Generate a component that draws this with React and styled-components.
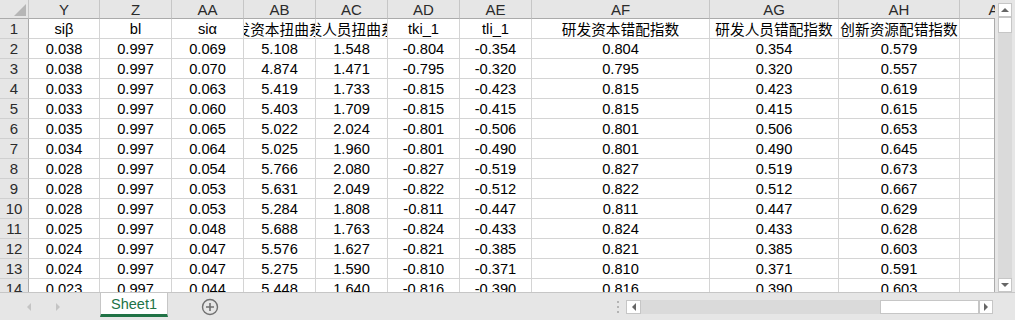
import React from 'react';
import styled, { createGlobalStyle } from 'styled-components';

const GlobalStyle = createGlobalStyle`
  html, body {
    margin: 0;
    padding: 0;
    background: #e6e6e6;
  }
  body {
    font-family: "Liberation Sans", "Noto Sans CJK SC", sans-serif;
  }
`;

const columns = [
  { name: 'Y', width: 71 },
  { name: 'Z', width: 72 },
  { name: 'AA', width: 72 },
  { name: 'AB', width: 72 },
  { name: 'AC', width: 72 },
  { name: 'AD', width: 72 },
  { name: 'AE', width: 72 },
  { name: 'AF', width: 178 },
  { name: 'AG', width: 129 },
  { name: 'AH', width: 121 },
  { name: 'AI', width: 72 }
];

const template = `29px ${columns.map(c => c.width + 'px').join(' ')}`;

const titles = [
  'siβ', 'bl', 'siα', '研发资本扭曲系数', '研发人员扭曲系数', 'tki_1', 'tli_1',
  '研发资本错配指数', '研发人员错配指数', '创新资源配错指数', ''
];

const data = [
  ['0.038', '0.997', '0.069', '5.108', '1.548', '-0.804', '-0.354', '0.804', '0.354', '0.579'],
  ['0.038', '0.997', '0.070', '4.874', '1.471', '-0.795', '-0.320', '0.795', '0.320', '0.557'],
  ['0.033', '0.997', '0.063', '5.419', '1.733', '-0.815', '-0.423', '0.815', '0.423', '0.619'],
  ['0.033', '0.997', '0.060', '5.403', '1.709', '-0.815', '-0.415', '0.815', '0.415', '0.615'],
  ['0.035', '0.997', '0.065', '5.022', '2.024', '-0.801', '-0.506', '0.801', '0.506', '0.653'],
  ['0.034', '0.997', '0.064', '5.025', '1.960', '-0.801', '-0.490', '0.801', '0.490', '0.645'],
  ['0.028', '0.997', '0.054', '5.766', '2.080', '-0.827', '-0.519', '0.827', '0.519', '0.673'],
  ['0.028', '0.997', '0.053', '5.631', '2.049', '-0.822', '-0.512', '0.822', '0.512', '0.667'],
  ['0.028', '0.997', '0.053', '5.284', '1.808', '-0.811', '-0.447', '0.811', '0.447', '0.629'],
  ['0.025', '0.997', '0.048', '5.688', '1.763', '-0.824', '-0.433', '0.824', '0.433', '0.628'],
  ['0.024', '0.997', '0.047', '5.576', '1.627', '-0.821', '-0.385', '0.821', '0.385', '0.603'],
  ['0.024', '0.997', '0.047', '5.275', '1.590', '-0.810', '-0.371', '0.810', '0.371', '0.591'],
  ['0.023', '0.997', '0.044', '5.448', '1.640', '-0.816', '-0.390', '0.816', '0.390', '0.603']
];

const Window = styled.div`
  width: 1015px;
  height: 320px;
  overflow: hidden;
  display: flex;
  flex-direction: column;
  background: #e6e6e6;
`;

const Workspace = styled.div`
  height: 292px;
  display: flex;
`;

const Viewport = styled.div`
  width: 995px;
  height: 292px;
  overflow: hidden;
  position: relative;

  &::after {
    content: '';
    position: absolute;
    top: 18px;
    right: 0;
    bottom: 0;
    width: 1px;
    background: #ababab;
  }
`;

const Row = styled.div`
  display: grid;
  grid-template-columns: ${template};
  width: max-content;
  height: ${props => (props.header ? 19 : 20)}px;
`;

const Corner = styled.div`
  background: #e6e6e6;
  border-right: 1px solid #c6c6c6;
  border-bottom: 1px solid #ababab;
  display: flex;
  align-items: flex-end;
  justify-content: flex-end;
  padding: 0 2px 2px 0;
`;

const ColHead = styled.div`
  background: #e6e6e6;
  border-right: 1px solid #c6c6c6;
  border-bottom: 1px solid #ababab;
  color: #2b2b2b;
  font-size: 15px;
  display: flex;
  align-items: center;
  justify-content: center;
  white-space: nowrap;
`;

const RowHead = styled.div`
  background: #e6e6e6;
  border-right: 1px solid #ababab;
  border-bottom: 1px solid #d0d0d0;
  color: #2b2b2b;
  font-size: 15px;
  display: flex;
  align-items: center;
  justify-content: center;
`;

const Cell = styled.div`
  background: #fff;
  border-right: 1px solid #d4d4d4;
  border-bottom: 1px solid #d4d4d4;
  color: #000;
  font-size: 14.67px;
  display: flex;
  align-items: center;
  justify-content: center;
  white-space: nowrap;
  overflow: hidden;
`;

const VScroll = styled.div`
  width: 20px;
  display: flex;
  flex-direction: column;
  padding: 3px 3px 0;
  box-sizing: border-box;
`;

const ScrollButton = styled.div`
  width: ${props => props.w || 14}px;
  height: ${props => props.h || 14}px;
  box-sizing: border-box;
  background: #fff;
  border: 1px solid #c6c6c6;
  display: flex;
  align-items: center;
  justify-content: center;
  flex-shrink: 0;
`;

const Thumb = styled.div`
  background: #fff;
  border: 1px solid #c6c6c6;
  box-sizing: border-box;
  flex-shrink: 0;
  ${props => (props.vertical ? 'height: 16px;' : 'width: 99px; height: 14px;')}
`;

const Track = styled.div`
  flex: 1;
  background: #dadada;
`;

const Arrow = styled.span`
  width: 0;
  height: 0;
  border-style: solid;
  border-color: transparent;
  ${props => props.dir === 'up' && `border-width: 0 4px 4px; border-bottom-color: ${props.color};`}
  ${props => props.dir === 'down' && `border-width: 4px 4px 0; border-top-color: ${props.color};`}
  ${props => props.dir === 'left' && `border-width: 4px 4px 4px 0; border-right-color: ${props.color};`}
  ${props => props.dir === 'right' && `border-width: 4px 0 4px 4px; border-left-color: ${props.color};`}
`;

const BottomBar = styled.div`
  height: 28px;
  box-sizing: border-box;
  border-top: 1px solid #c6c6c6;
  display: flex;
  align-items: center;
`;

const Nav = styled.div`
  width: 88px;
  display: flex;
  align-items: center;
  gap: 25px;
  padding-left: 27px;
  box-sizing: border-box;
`;

const SheetTab = styled.div`
  align-self: flex-start;
  margin-left: 12px;
  width: 68px;
  height: 24px;
  box-sizing: border-box;
  background: #fff;
  border-left: 1px solid #c6c6c6;
  border-right: 1px solid #c6c6c6;
  border-bottom: 3px solid #217346;
  color: #217346;
  font-size: 14.5px;
  display: flex;
  align-items: center;
  justify-content: center;
  padding-top: 1px;
`;

const AddSheet = styled.div`
  margin-left: 33px;
  width: 18px;
  height: 18px;
  display: flex;
`;

const Grip = styled.div`
  margin-left: auto;
  width: 16px;
  display: flex;
  flex-direction: column;
  align-items: center;
  gap: 3px;

  span {
    width: 2px;
    height: 2px;
    background: #b4b4b4;
  }
`;

const HScroll = styled.div`
  width: 367px;
  height: 14px;
  margin-right: 22px;
  display: flex;
`;

export default function App() {
  return (
    <Window>
      <GlobalStyle />
      <Workspace>
        <Viewport>
          <Row header>
            <Corner>
              <svg width="12" height="12" viewBox="0 0 12 12">
                <polygon points="0,12 12,0 12,12" fill="#b6b6b6" />
              </svg>
            </Corner>
            {columns.map(c => (
              <ColHead key={c.name}>{c.name}</ColHead>
            ))}
          </Row>
          <Row>
            <RowHead>1</RowHead>
            {titles.map((t, i) => (
              <Cell key={i}>{t}</Cell>
            ))}
          </Row>
          {data.map((r, ri) => (
            <Row key={ri}>
              <RowHead>{ri + 2}</RowHead>
              {r.map((v, ci) => (
                <Cell key={ci}>{v}</Cell>
              ))}
              <Cell />
            </Row>
          ))}
        </Viewport>
        <VScroll>
          <ScrollButton>
            <Arrow dir="up" color="#666" />
          </ScrollButton>
          <Thumb vertical />
          <Track />
          <ScrollButton>
            <Arrow dir="down" color="#666" />
          </ScrollButton>
        </VScroll>
      </Workspace>
      <BottomBar>
        <Nav>
          <Arrow dir="left" color="#c4c4c4" />
          <Arrow dir="right" color="#c4c4c4" />
        </Nav>
        <SheetTab>Sheet1</SheetTab>
        <AddSheet>
          <svg width="18" height="18" viewBox="0 0 18 18">
            <circle cx="9" cy="9" r="7.5" fill="none" stroke="#707070" strokeWidth="1.4" />
            <path d="M9 5v8M5 9h8" stroke="#707070" strokeWidth="1.6" />
          </svg>
        </AddSheet>
        <Grip>
          <span />
          <span />
          <span />
        </Grip>
        <HScroll>
          <ScrollButton w={15}>
            <Arrow dir="left" color="#666" />
          </ScrollButton>
          <Track />
          <Thumb />
          <ScrollButton>
            <Arrow dir="right" color="#666" />
          </ScrollButton>
        </HScroll>
      </BottomBar>
    </Window>
  );
}
